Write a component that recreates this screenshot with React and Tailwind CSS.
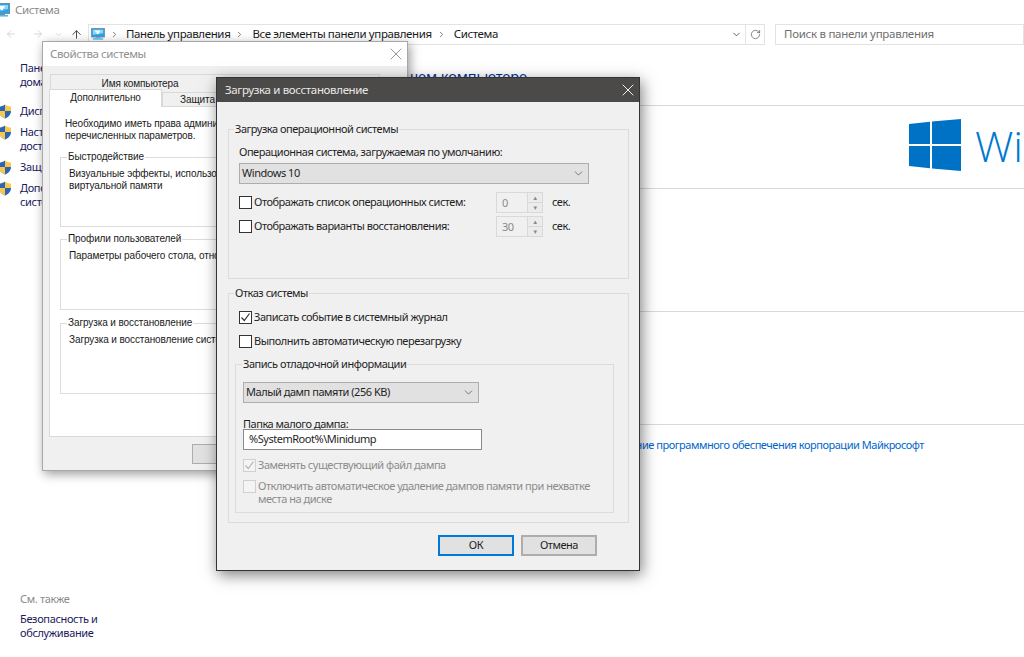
import React from "react";
import { X, ChevronDown, RotateCw, ArrowUp, ArrowLeft, ArrowRight, ChevronRight } from "lucide-react";

const Monitor = ({ className }) => (
  <svg viewBox="0 0 16 14" className={className}>
    <rect x="0.5" y="0.5" width="15" height="10" fill="#2aa3e8" stroke="#6d8fa8" />
    <path d="M2 2h12v4L2 8z" fill="#8fd5f7" />
    <path d="M4 3l7 0-3 5z" fill="#fff" />
    <rect x="5" y="11" width="6" height="1" fill="#7a8a96" />
    <rect x="2" y="12" width="12" height="1.6" fill="#46c0f0" />
  </svg>
);

const Shield = () => (
  <svg viewBox="0 0 14 15" className="w-[14px] h-[15px] shrink-0 -ml-[2px]">
    <path d="M7 .5C5.500 1.800 3.300 2.500 1 2.600V7c0 3.500 2.500 6 6 7.500z" fill="#2d63b8" />
    <path d="M7 .5C8.500 1.800 10.700 2.500 13 2.600V7H7z" fill="#f7c948" />
    <path d="M1 7h6v7.500C3.500 13 1 10.500 1 7z" fill="#f7c948" />
    <path d="M7 7h6c0 3.500-2.500 6-6 7.500z" fill="#2d63b8" />
  </svg>
);

const Check = ({ checked, disabled }) => (
  <span
    className={`w-[13px] h-[13px] shrink-0 border flex items-center justify-center ${
      disabled ? "border-[#d0d0d0] bg-[#f4f4f4]" : "border-[#333333] bg-white"
    }`}
  >
    {checked && (
      <svg viewBox="0 0 11 11" className="w-[11px] h-[11px]">
        <path d="M1.500 5.500l2.800 3L9.500 1.500" fill="none" stroke={disabled ? "#b5b5b5" : "#333"} strokeWidth="1.200" />
      </svg>
    )}
  </span>
);

const Spinner = ({ value, text }) => (
  <div className="flex items-center h-[21px] mb-[3px]">
    <Check />
    <span className="ml-[2px] w-[242px] whitespace-nowrap">{text}</span>
    <div className="w-[47px] h-[21px] border border-[#d9d9d9] flex">
      <span className="flex-1 pl-[5px] text-[#8a8a8a] leading-[19px]">{value}</span>
      <div className="w-[15px] flex flex-col border-l border-[#d9d9d9] bg-[#ececec]">
        <span className="flex-1 flex items-center justify-center text-[6px] leading-none text-[#8a8a8a] border-b border-[#d9d9d9]">▲</span>
        <span className="flex-1 flex items-center justify-center text-[6px] leading-none text-[#8a8a8a]">▼</span>
      </div>
    </div>
    <span className="ml-[9px]">сек.</span>
  </div>
);

const Select = ({ text, className }) => (
  <div className={`h-[21px] bg-[#e1e1e1] border border-[#adadad] flex items-center justify-between pl-[2px] pr-[3px] ${className}`}>
    <span>{text}</span>
    <ChevronDown className="w-[13px] h-[13px] text-[#606060]" strokeWidth={1.500} />
  </div>
);

const SideLink = ({ shield, children }) => (
  <div className="flex items-start">
    <span className="w-[20px] h-[14px] flex items-center">{shield && <Shield />}</span>
    <span className="w-[175px] leading-[14px] text-[#1a1a5c]">{children}</span>
  </div>
);

const BackGroup = ({ title, children, className }) => (
  <fieldset className={`border border-[#dcdcdc] ml-[10px] w-[400px] pl-[8px] ${className}`}>
    <legend className="-ml-[2px] px-[1px] leading-[14px]">{title}</legend>
    <p className="leading-[12px] mt-[4px]">{children}</p>
  </fieldset>
);

export default function App() {
  return (
    <div className="relative w-[1024px] h-[657px] overflow-hidden bg-white text-[11px] tracking-[-0.47px] text-[#1a1a1a] font-['Noto_Sans',sans-serif]">
      {/* title bar */}
      <div className="h-[20px] flex items-center -ml-[6px]">
        <Monitor className="w-[16px] h-[14px]" />
        <span className="ml-[5px] text-[#8a8a8a] text-[11.500px] tracking-[-0.35px]">Система</span>
      </div>

      {/* toolbar */}
      <div className="h-[24px] mt-[2px] flex items-center text-[#c8c8c8]">
        <ArrowLeft className="w-[12px] h-[12px] ml-[5px]" strokeWidth={1.500} />
        <ArrowRight className="w-[12px] h-[12px] ml-[15px]" strokeWidth={1.500} />
        <ChevronDown className="w-[9px] h-[9px] ml-[10px]" strokeWidth={1.500} />
        <ArrowUp className="w-[13px] h-[13px] ml-[7px] text-[#444444]" strokeWidth={1.800} />
        <div className="ml-[5px] w-[677px] h-[21px] border border-[#e3e3e3] flex items-center text-[#1a1a1a] text-[11.500px] tracking-[-0.38px]">
          <Monitor className="w-[14px] h-[12px] ml-[2px]" />
          <ChevronRight className="w-[9px] h-[9px] ml-[5px] mr-[7px] text-[#555555]" strokeWidth={2} />
          <span>Панель управления</span>
          <ChevronRight className="w-[9px] h-[9px] ml-[5px] mr-[8px] text-[#555555]" strokeWidth={2} />
          <span>Все элементы панели управления</span>
          <ChevronRight className="w-[9px] h-[9px] ml-[5px] mr-[8px] text-[#555555]" strokeWidth={2} />
          <span>Система</span>
          <ChevronDown className="w-[11px] h-[11px] ml-auto mr-[3px] text-[#555555]" strokeWidth={2} />
          <div className="w-[19px] h-full border-l border-[#e3e3e3] flex items-center justify-center">
            <RotateCw className="w-[11px] h-[11px] text-[#555555]" strokeWidth={1.500} />
          </div>
        </div>
        <div className="ml-[10px] flex-1 h-[21px] border border-[#e3e3e3] flex items-center pl-[8px] text-[#6f6f6f] text-[11.500px] tracking-[-0.28px]">
          Поиск в панели управления
        </div>
      </div>

      {/* page */}
      <div className="flex h-[611px]">
        <aside className="w-[200px] shrink-0 flex flex-col justify-between pb-[17px] tracking-[-0.35px]">
          <div className="pt-[15px] flex flex-col">
            <SideLink>Панель управления —<br />домашняя страница</SideLink>
            <div className="h-[15px]" />
            <div className="flex flex-col gap-[7px]">
              <SideLink shield>Диспетчер устройств</SideLink>
              <SideLink shield>Настройка удаленного<br />доступа</SideLink>
              <SideLink shield>Защита системы</SideLink>
              <SideLink shield>Дополнительные параметры<br />системы</SideLink>
            </div>
          </div>
          <div className="pl-[20px]">
            <div className="text-[#8a8a8a] leading-[14px] mb-[6px]">См. также</div>
            <div className="w-[120px] leading-[14px] text-[#1a1a5c]">Безопасность и обслуживание</div>
          </div>
        </aside>
        <main className="flex-1 min-w-0">
          <div className="h-[60px] border-b border-[#d9d9d9] pt-[20px] pr-[497px] flex justify-end text-[14.500px] tracking-[-0.05px] text-[#003399] leading-[20px] whitespace-nowrap">
            Просмотр основных сведений о вашем компьютере
          </div>
          <div className="h-[83px] border-b border-[#d9d9d9] pt-[13px] pl-[709px] overflow-hidden">
            <div className="flex items-center h-[52px]">
              <svg viewBox="0 0 52 52" className="w-[52px] h-[52px] shrink-0">
                <path d="M0 5L21 2.700V25H0zM23 2.400L52 0V25H23zM0 27H21V49.300L0 47zM23 27H52V52L23 49.600z" fill="#0072c6" />
              </svg>
              <span className="ml-[14px] text-[43px] leading-none tracking-normal font-['Open_Sans',sans-serif] font-light text-[#0078d0] whitespace-nowrap">Windows 10</span>
            </div>
          </div>
          <div className="h-[123px] border-b border-[#d9d9d9]" />
          <div className="h-[113px] border-b border-[#d9d9d9]" />
          <div className="pt-[12px] pr-[100px] flex justify-end whitespace-nowrap text-[#0066cc]">
            Условия лицензионного соглашения на использование программного обеспечения корпорации Майкрософт
          </div>
        </main>
      </div>

      {/* back dialog */}
      <div className="absolute left-[42px] top-[41px] w-[366px] h-[430px] bg-[#f0f0f0] border border-[#a8a8a8] shadow-[2px_3px_10px_rgba(0,0,0,0.4)] flex flex-col font-['Liberation_Sans',sans-serif] text-[10px] tracking-[-0.1px]">
        <div className="h-[24px] bg-white flex items-center justify-between pl-[7px] pr-[1px] text-[#8f8f8f] text-[11.500px] tracking-[-0.4px] font-['Noto_Sans',sans-serif] shrink-0">
          <span>Свойства системы</span>
          <X className="w-[20px] h-[20px] text-[#999999]" strokeWidth={1.200} />
        </div>
        <div className="pt-[8px] pl-[6px] flex-1 flex flex-col">
          <div className="ml-[1px] w-[330px] h-[15px] border border-b-0 border-[#d9d9d9] text-center leading-[18px] pr-[150px]">Имя компьютера</div>
          <div className="flex h-[18px] items-end relative">
            <div className="w-[113px] h-[18px] bg-white border border-b-0 border-[#d9d9d9] text-center leading-[15px] relative z-10">Дополнительно</div>
            <div className="w-[80px] h-[15px] border border-[#d9d9d9] pl-[17px] leading-[13px]">Защита</div>
            <div className="flex-1 border-b border-[#d9d9d9]" />
          </div>
          <div className="-mt-[1px] w-[352px] h-[331px] bg-white border border-[#d9d9d9] border-t-0 overflow-hidden">
            <p className="pl-[15px] pt-[12px] leading-[12px] w-[400px]">Необходимо иметь права администратора для изменения большинства<br />перечисленных параметров.</p>
            <BackGroup title="Быстродействие" className="mt-[8px] h-[77px]">
              Визуальные эффекты, использование процессора, оперативной и<br />виртуальной памяти
            </BackGroup>
            <BackGroup title="Профили пользователей" className="mt-[5px] h-[78px]">
              Параметры рабочего стола, относящиеся ко входу в систему
            </BackGroup>
            <BackGroup title="Загрузка и восстановление" className="mt-[6px] h-[78px]">
              Загрузка и восстановление системы, отладочная информация
            </BackGroup>
          </div>
          <div className="pl-[143px] pt-[7px]">
            <div className="w-[76px] h-[20px] bg-[#e1e1e1] border border-[#adadad]" />
          </div>
        </div>
      </div>

      {/* front dialog */}
      <div className="absolute left-[216px] top-[77px] w-[424px] h-[494px] bg-[#f0f0f0] border border-[#333333] shadow-[2px_4px_14px_rgba(0,0,0,0.5)] flex flex-col text-[#1f1f1f]">
        <div className="h-[24px] bg-[#4c4a48] shrink-0 flex items-center justify-between pl-[8px] pr-[1px] text-[#e8e8e8] text-[11.500px] tracking-[-0.35px]">
          <span>Загрузка и восстановление</span>
          <X className="w-[20px] h-[20px] text-[#f0f0f0]" strokeWidth={1.200} />
        </div>
        <div className="px-[11px] flex-1 flex flex-col">
          <fieldset className="mt-[19px] h-[158px] border border-[#dcdcdc] pl-[10px] pt-[8px] w-[401px]">
            <legend className="-ml-[5px] px-[1px] leading-[16px] whitespace-nowrap">Загрузка операционной системы</legend>
            <div className="leading-[14px] mb-[4px]">Операционная система, загружаемая по умолчанию:</div>
            <Select text="Windows 10" className="w-[350px]" />
            <div className="mt-[8px]">
              <Spinner value="0" text="Отображать список операционных систем:" />
              <Spinner value="30" text="Отображать варианты восстановления:" />
            </div>
          </fieldset>
          <fieldset className="mt-[6px] h-[238px] border border-[#dcdcdc] pl-[10px] pr-[14px] w-[401px]">
            <legend className="-ml-[5px] px-[1px] leading-[16px]">Отказ системы</legend>
            <div className="flex items-center gap-[2px] mt-[9px] h-[15px]"><Check checked /><span>Записать событие в системный журнал</span></div>
            <div className="flex items-center gap-[2px] mt-[9px] h-[15px]"><Check /><span>Выполнить автоматическую перезагрузку</span></div>
            <fieldset className="-ml-[4px] mt-[7px] h-[157px] border border-[#dcdcdc] pl-[7px] pr-[10px]">
              <legend className="-ml-[1px] px-[1px] leading-[16px]">Запись отладочной информации</legend>
              <Select text="Малый дамп памяти (256 KB)" className="w-[236px] mt-[10px]" />
              <div className="leading-[14px] mt-[14px]">Папка малого дампа:</div>
              <div className="-mt-[2px] w-[239px] h-[21px] bg-white border border-[#8a8a8a] pl-[5px] leading-[18px]">%SystemRoot%\Minidump</div>
              <div className="flex items-center gap-[2px] mt-[8px] h-[15px] text-[#8c8c8c]"><Check checked disabled /><span>Заменять существующий файл дампа</span></div>
              <div className="flex items-start gap-[2px] mt-[6px] text-[#8c8c8c] leading-[13px]"><span className="mt-[1px]"><Check disabled /></span><span className="w-[345px]">Отключить автоматическое удаление дампов памяти при нехватке места на диске</span></div>
            </fieldset>
          </fieldset>
          <div className="flex gap-[7px] mt-[12px] ml-[210px]">
            <div className="w-[76px] h-[21px] bg-[#e1e1e1] border-2 border-[#0078d7] flex items-center justify-center">ОК</div>
            <div className="w-[76px] h-[21px] bg-[#e1e1e1] border-2 border-[#adadad] flex items-center justify-center">Отмена</div>
          </div>
        </div>
      </div>
    </div>
  );
}
